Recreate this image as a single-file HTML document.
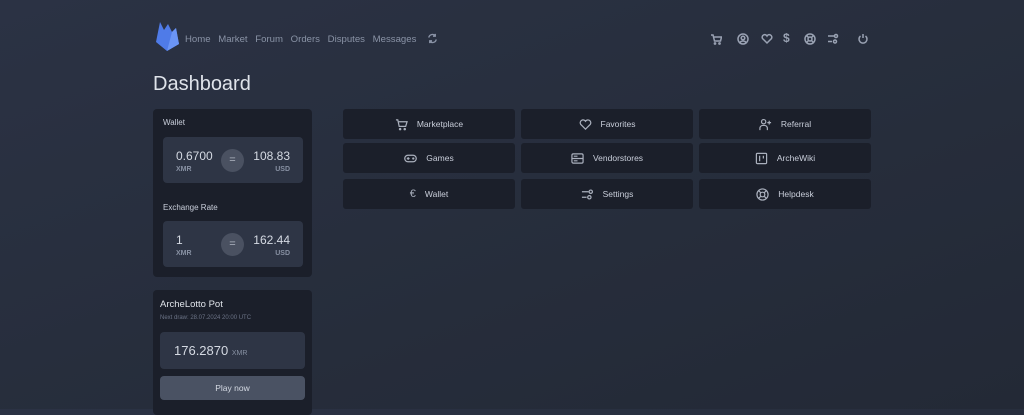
<!DOCTYPE html>
<html><head><style>
*{margin:0;padding:0;box-sizing:border-box}
body{width:1024px;height:409px;overflow:hidden;background:linear-gradient(160deg,#2b3244 0%,#262d3b 60%,#232936 100%);font-family:"Liberation Sans",sans-serif;color:#c9ceda;position:relative}
.nav{position:absolute;top:34px;left:185px;font-size:9.6px;color:#8a93a6;white-space:nowrap}
.nav span{margin-right:5px}
h1{position:absolute;left:153px;top:73px;font-weight:normal;font-size:20px;color:#dfe3ea}
.card{position:absolute;background:#1b1f2a;border-radius:4px}
.lbl{position:absolute;font-size:8px;color:#c9ceda}
.box{position:absolute;background:#2e3545;border-radius:4px;width:140px;height:46px}
.box .l{position:absolute;left:13px;top:12px;font-size:12px;color:#d5dae3}
.box .r{position:absolute;right:13px;top:12px;font-size:12px;color:#d5dae3}
.box .ls{position:absolute;left:13px;top:29px;font-size:7px;color:#8891a3;font-weight:bold}
.box .rs{position:absolute;right:13px;top:29px;font-size:7px;color:#8891a3;font-weight:bold}
.eq{position:absolute;left:58px;top:12px;width:23px;height:23px;border-radius:50%;background:#4a5161;color:#b0b6c2;font-size:11px;text-align:center;line-height:23px}
.btn{position:absolute;width:172px;height:30px;background:#1b1f2a;border-radius:3px;font-size:8.5px;color:#c9ceda;display:flex;align-items:center;justify-content:center;gap:9px}
.btn svg{width:13px;height:13px;stroke:#aab0bd;fill:none;stroke-width:1.3}
.ic{position:absolute;top:32px}
.ic svg{width:12px;height:12px;stroke:#9aa2b3;fill:none;stroke-width:1.5}
</style></head><body>
<svg style="position:absolute;left:154px;top:20px" width="26" height="32" viewBox="0 0 26 32"><path d="M2 22 L6 2 L10 10 L14 4 L18 12 L22 8 L25 24 L13 31 Z" fill="#4f7be8"/><path d="M13 31 L25 24 L22 8 L18 12Z" fill="#6b95f5"/></svg>
<div class="nav"><span>Home</span> <span>Market</span> <span>Forum</span> <span>Orders</span> <span>Disputes</span> <span>Messages</span></div>
<svg style="position:absolute;left:427px;top:33px" width="11" height="11" viewBox="0 0 12 12" fill="none" stroke="#8a93a6" stroke-width="1.5"><path d="M2 5 A4 4 0 0 1 9 3 M10 7 A4 4 0 0 1 3 9"/><path d="M9 1v2.5H6.5M3 11V8.5h2.5"/></svg>
<div class="ic" style="left:710px"><svg viewBox="0 0 12 12"><path d="M1 2h2l1.5 6h6l1-4H4"/><circle cx="5" cy="10.5" r=".6"/><circle cx="9.5" cy="10.5" r=".6"/></svg></div>
<div class="ic" style="left:737px"><svg viewBox="0 0 12 12"><circle cx="6" cy="6" r="5"/><circle cx="6" cy="5" r="1.8"/><path d="M3 9.5a3.5 3 0 0 1 6 0"/></svg></div>
<div class="ic" style="left:761px"><svg viewBox="0 0 12 12"><path d="M6 10 L1.5 5.5 A2.3 2.3 0 0 1 6 3 A2.3 2.3 0 0 1 10.5 5.5Z"/></svg></div>
<div class="ic" style="left:783px;font-size:12px;color:#9aa2b3;top:31px;font-weight:bold">$</div>
<div class="ic" style="left:804px"><svg viewBox="0 0 12 12"><circle cx="6" cy="6" r="5"/><circle cx="6" cy="6" r="2"/><path d="M2.5 2.5l2 2M9.5 2.5l-2 2M2.5 9.5l2-2M9.5 9.5l-2-2"/></svg></div>
<div class="ic" style="left:827px"><svg viewBox="0 0 12 12"><path d="M1 3h6M1 8.5h4"/><circle cx="9" cy="3" r="1.5"/><circle cx="8" cy="8.5" r="1.5"/></svg></div>
<div class="ic" style="left:857px"><svg viewBox="0 0 12 12"><path d="M6 1v4M3.5 3a4 4 0 1 0 5 0"/></svg></div>
<h1>Dashboard</h1>
<div class="card" style="left:153px;top:109px;width:159px;height:168px">
<div class="lbl" style="left:10px;top:9px">Wallet</div>
<div class="box" style="left:10px;top:28px"><div class="l">0.6700</div><div class="ls">XMR</div><div class="eq">=</div><div class="r">108.83</div><div class="rs">USD</div></div>
<div class="lbl" style="left:10px;top:94px">Exchange Rate</div>
<div class="box" style="left:10px;top:112px"><div class="l">1</div><div class="ls">XMR</div><div class="eq">=</div><div class="r">162.44</div><div class="rs">USD</div></div>
</div>
<div class="card" style="left:153px;top:290px;width:159px;height:125px">
<div style="position:absolute;left:7px;top:9px;font-size:9.5px;color:#e0e4ea">ArcheLotto Pot</div>
<div style="position:absolute;left:7px;top:25px;font-size:6px;color:#6c7487">Next draw: 28.07.2024 20:00 UTC</div>
<div style="position:absolute;left:7px;top:42px;width:145px;height:37px;background:#2e3545;border-radius:4px"><span style="position:absolute;left:14px;top:11px;font-size:13px;color:#d5dae3">176.2870 <span style="font-size:7px;color:#8891a3">XMR</span></span></div>
<div style="position:absolute;left:7px;top:86px;width:145px;height:24px;background:#4a5263;border-radius:4px;text-align:center;line-height:24px;font-size:8.5px;color:#d5dae3">Play now</div>
</div>
<div class="btn" style="left:343px;top:109px"><svg viewBox="0 0 14 14"><path d="M1 2h2l1.5 7h7l1.5-5H4"/><circle cx="5.5" cy="12" r=".7"/><circle cx="10.5" cy="12" r=".7"/></svg>Marketplace</div>
<div class="btn" style="left:521px;top:109px"><svg viewBox="0 0 14 14"><path d="M7 12 L1.8 6.8 A2.8 2.8 0 0 1 7 3.5 A2.8 2.8 0 0 1 12.2 6.8Z"/></svg>Favorites</div>
<div class="btn" style="left:699px;top:109px"><svg viewBox="0 0 14 14"><circle cx="5" cy="4" r="2.3"/><path d="M1 13v-2a3 3 0 0 1 3-3h2a3 3 0 0 1 3 3v2M11 3v4M9 5h4"/></svg>Referral</div>
<div class="btn" style="left:343px;top:143px"><svg viewBox="0 0 14 14"><rect x="0.8" y="3.5" width="12.4" height="7" rx="3.5"/><path d="M3 7h3M4.5 5.5v3"/><circle cx="10" cy="7" r=".6"/></svg>Games</div>
<div class="btn" style="left:521px;top:143px"><svg viewBox="0 0 14 14"><rect x="1" y="2" width="12" height="10" rx="1.5"/><path d="M1 7h12M3 4.5h4M3 9.5h4"/></svg>Vendorstores</div>
<div class="btn" style="left:699px;top:143px"><svg viewBox="0 0 14 14"><rect x="1.5" y="1.5" width="11" height="11" rx="1"/><path d="M5 4v6M9 4v3"/></svg>ArcheWiki</div>
<div class="btn" style="left:343px;top:179px"><span style="font-size:11px;color:#aab0bd">€</span>Wallet</div>
<div class="btn" style="left:521px;top:179px"><svg viewBox="0 0 14 14"><path d="M1 4h7M1 10h5"/><circle cx="10.5" cy="4" r="1.8"/><circle cx="9" cy="10" r="1.8"/></svg>Settings</div>
<div class="btn" style="left:699px;top:179px"><svg viewBox="0 0 14 14"><circle cx="7" cy="7" r="6"/><circle cx="7" cy="7" r="2.5"/><path d="M2.8 2.8l2.4 2.4M11.2 2.8l-2.4 2.4M2.8 11.2l2.4-2.4M11.2 11.2l-2.4-2.4"/></svg>Helpdesk</div>
</body></html>
